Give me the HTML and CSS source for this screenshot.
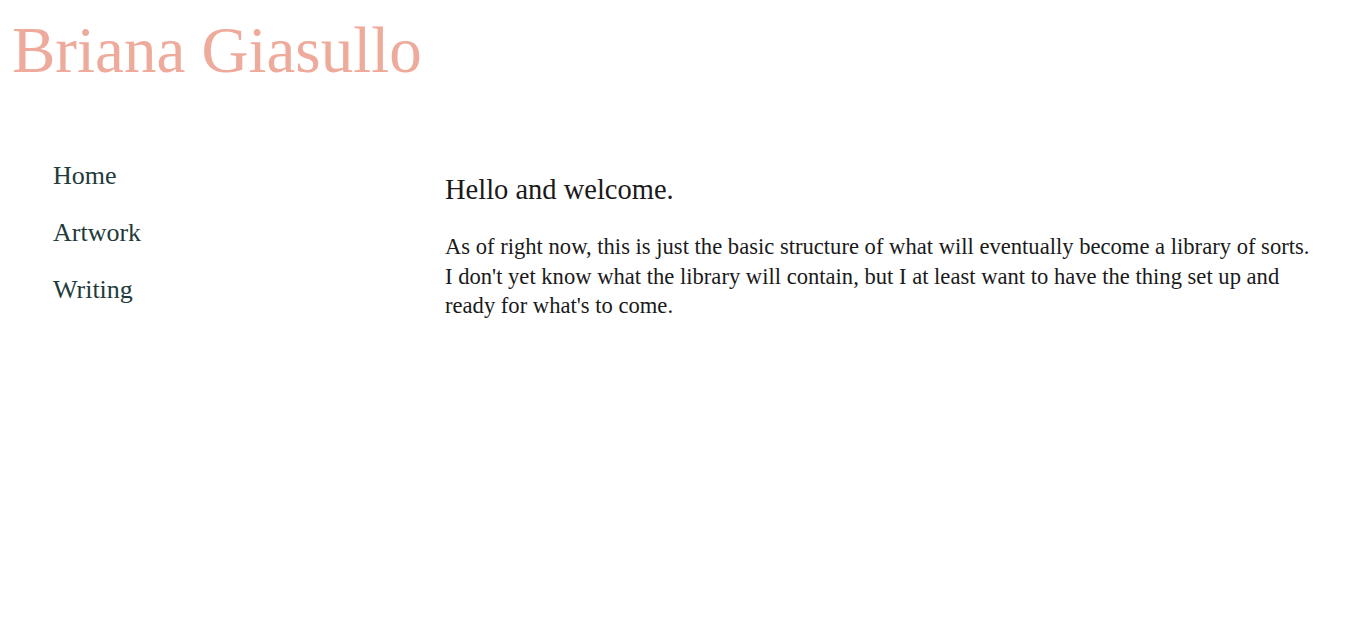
FILE: index.html
```html
<!DOCTYPE html>
<html lang="en">
<head>
<meta charset="utf-8">
<title>Briana Giasullo</title>
<link rel="stylesheet" href="styles.css">
</head>
<body>
<header class="site-header">
  <h1 class="site-title">Briana Giasullo</h1>
</header>
<div class="layout">
  <nav class="side-nav">
    <a class="nav-link" href="#">Home</a>
    <a class="nav-link" href="#">Artwork</a>
    <a class="nav-link" href="#">Writing</a>
  </nav>
  <main class="content">
    <h2 class="content-title">Hello and welcome.</h2>
    <p class="content-text">As of right now, this is just the basic structure of what will eventually become a library of sorts. I don't yet know what the library will contain, but I at least want to have the thing set up and ready for what's to come.</p>
  </main>
</div>
</body>
</html>
```
FILE: styles.css
```css
html, body {
  margin: 0;
  padding: 0;
  background: #ffffff;
}
body {
  font-family: "Liberation Serif", "Times New Roman", serif;
  color: #1a1a1a;
}
.site-header {
  padding: 10px 0 0 12px;
}
.site-title {
  margin: 0;
  font-weight: normal;
  font-size: 65px;
  line-height: 80px;
  color: #eeab9c;
}
.layout {
  display: flex;
  padding-top: 70px;
}
.side-nav {
  width: 392px;
  padding-left: 53px;
  padding-top: 1px;
  display: flex;
  flex-direction: column;
  gap: 28px;
}
.nav-link {
  font-size: 26px;
  line-height: 29px;
  color: #1f3b3c;
  text-decoration: none;
}
.content {
  flex: 1;
  max-width: 872px;
}
.content-title {
  margin: 14px 0 0;
  font-weight: normal;
  font-size: 28.5px;
  line-height: 32px;
}
.content-text {
  margin: 26px 0 0;
  font-size: 22.6px;
  line-height: 29.5px;
}
```
